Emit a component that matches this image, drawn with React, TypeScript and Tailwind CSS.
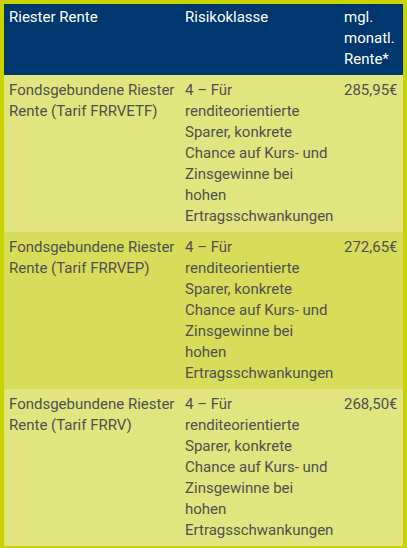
const rows = [
  { name: "Fondsgebundene Riester Rente (Tarif FRRVETF)", rente: "285,95€" },
  { name: "Fondsgebundene Riester Rente (Tarif FRRVEP)", rente: "272,65€" },
  { name: "Fondsgebundene Riester Rente (Tarif FRRV)", rente: "268,50€" },
];

const risk =
  "4 – Für renditeorientierte Sparer, konkrete Chance auf Kurs- und Zinsgewinne bei hohen Ertragsschwankungen";

export default function App() {
  return (
    <div
      className="w-[407px] h-[548px] border-4 border-[#c8d300] bg-[#e1e57f] text-[15px] leading-[21px]"
      style={{ fontFamily: "Roboto, 'Liberation Sans', sans-serif" }}
    >
      {/* Kopfzeile */}
      <div className="grid grid-cols-[176px_159px_64px] bg-[#00376f] text-white">
        <div className="px-[5px] pt-[3px] pb-[5px]">Riester Rente</div>
        <div className="px-[5px] pt-[3px] pb-[5px]">Risikoklasse</div>
        <div className="px-[5px] pt-[3px] pb-[5px]">mgl. monatl. Rente*</div>
      </div>

      {rows.map((r, i) => (
        <div
          key={r.name}
          className={
            "grid grid-cols-[176px_159px_64px] text-[#505050] " +
            (i % 2 === 1 ? "bg-[#d7dd5b]" : "bg-[#e1e57f]")
          }
        >
          <div className="px-[5px] py-[5px]">{r.name}</div>
          <div className="px-[5px] py-[5px]">{risk}</div>
          <div className="px-[5px] py-[5px]">{r.rente}</div>
        </div>
      ))}
    </div>
  );
}
